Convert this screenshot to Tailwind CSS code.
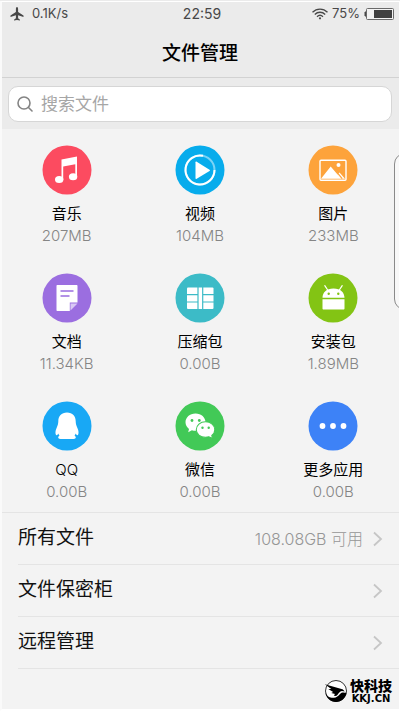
<!DOCTYPE html>
<html lang="zh-CN">
<head>
<meta charset="utf-8">
<meta name="viewport" content="width=device-width, initial-scale=1">
<title>文件管理</title>
<script src="https://cdn.jsdelivr.net/npm/@tailwindcss/browser@4"></script>
</head>
<body class="bg-white">
<div class="relative flex min-h-screen flex-col overflow-hidden bg-[#f3f3f3] font-['Inter','Noto_Sans_CJK_SC',sans-serif] text-black">
  <header class="border-b border-[#d2d2d2] bg-[#ebebeb]">
    <div class="grid h-7 grid-cols-3 items-center pr-1.5 pl-2.5 text-[13px] text-[#484848]">
      <div class="flex items-center gap-2">
        <svg class="size-3.5" viewBox="0 0 14 14" fill="#484848" aria-hidden="true"><path d="M7 0c.7 0 1.1.9 1.1 2v2.900l5.400 3.700v1.300L8.100 8.200v3l1.900 1.500v.900L7 13l-3 .6v-.9l1.900-1.500v-3L.5 9.900V8.600l5.400-3.700V2C5.900.900 6.300 0 7 0Z"/></svg>
        <span>0.1K/s</span>
      </div>
      <time class="text-center text-sm">22:59</time>
      <div class="flex items-center justify-end gap-1">
        <svg class="h-3 w-4" viewBox="0 0 16 12" fill="none" stroke="#484848" stroke-width="1.300" aria-hidden="true"><path d="M.5 4.200c4.300-4.200 10.700-4.200 15 0M2.800 6.500c3-3 7.400-3 10.400 0M5 8.700c1.800-1.700 4.200-1.700 6 0"/><circle cx="8" cy="10.300" r="1.100" fill="#484848" stroke="none"/></svg>
        <span>75%</span>
        <svg class="h-3 w-7.5" viewBox="0 0 30 12" aria-hidden="true"><path d="M2 4H1v4h1" fill="#484848" stroke="#484848"/><rect x="2.500" y=".5" width="27" height="11" rx="1" fill="#f3f3f3" stroke="#6a6a6a"/><rect x="10" y="2" width="18" height="8" fill="#404040"/></svg>
      </div>
    </div>
    <h1 class="flex h-[49px] items-center justify-center pt-1 text-[19px] font-medium">文件管理</h1>
  </header>

  <form class="bg-[#ebebeb] px-2 pt-2 pb-[7px]" role="search">
    <div class="flex h-9 items-center gap-2 rounded-[10px] border border-[#d6d6d6] bg-white px-2">
      <label for="q" aria-label="搜索文件"><svg class="size-4" viewBox="0 0 16 16" fill="none" stroke="#848484" stroke-width="1.600" stroke-linecap="round" aria-hidden="true"><circle cx="7" cy="7" r="6"/><path d="m11.500 11.500 3.500 3.500"/></svg></label>
      <input id="q" type="search" placeholder="搜索文件" class="min-w-0 flex-1 bg-transparent pt-0.5 text-[17px] outline-none placeholder:text-[#a6a6a6]">
    </div>
  </form>

  <main class="flex-1">
    <section class="grid grid-cols-3 gap-y-[17px] pt-4">
      <button type="button" class="flex h-[111px] flex-col items-center">
        <svg class="size-[50px]" viewBox="0 0 50 50" aria-hidden="true"><circle cx="25" cy="25" r="24.500" fill="#fc4b60"/><path d="M19.500 14.500 35 11.500v20h-1.700V19.300l-12.100 2.300v13.200h-1.700Z" fill="#fff"/><ellipse cx="17.200" cy="34.600" rx="4.200" ry="3.500" fill="#fff"/><ellipse cx="31.100" cy="31.700" rx="4.200" ry="3.500" fill="#fff"/></svg>
        <span class="mt-[7px] text-[15px] leading-6">音乐</span>
        <span class="text-[15px] leading-5 font-light text-[#858585]">207MB</span>
      </button>
      <button type="button" class="flex h-[111px] flex-col items-center">
        <svg class="size-[50px]" viewBox="0 0 50 50" aria-hidden="true"><circle cx="25" cy="25" r="24.500" fill="#07acec"/><circle cx="25" cy="25" r="14.500" fill="none" stroke="#7bd3f5" stroke-width="2"/><path d="M39.500 25A14.500 14.500 0 1 1 28 10.800" fill="none" stroke="#fff" stroke-width="2"/><path d="M20.500 17.300v15.900c0 .8.500 1 1.200.6l12.800-7.800c.6-.4.600-.9 0-1.300l-12.800-8c-.7-.4-1.200-.2-1.200.6Z" fill="#fff"/></svg>
        <span class="mt-[7px] text-[15px] leading-6">视频</span>
        <span class="text-[15px] leading-5 font-light text-[#858585]">104MB</span>
      </button>
      <button type="button" class="flex h-[111px] flex-col items-center">
        <svg class="size-[50px]" viewBox="0 0 50 50" aria-hidden="true"><circle cx="25" cy="25" r="24.500" fill="#fda33b"/><rect x="12" y="15.200" width="26" height="20" rx="1" fill="none" stroke="#fff" stroke-width="1.400"/><circle cx="30.500" cy="20" r="2" fill="#fff"/><path d="m13 33.800 9.700-12.300 6.800 8 2-2 5.500 6.300Z" fill="#fff"/><path d="m29.500 28 4.700 5.600" stroke="#fda33b" stroke-width="1.200"/></svg>
        <span class="mt-[7px] text-[15px] leading-6">图片</span>
        <span class="text-[15px] leading-5 font-light text-[#858585]">233MB</span>
      </button>
      <button type="button" class="flex h-[111px] flex-col items-center">
        <svg class="size-[50px]" viewBox="0 0 50 50" aria-hidden="true"><circle cx="25" cy="25" r="24.500" fill="#9b6ee0"/><path d="M15.500 12h19c.7 0 1 .4 1 1v16.500h-7.700V38H15.500c-.7 0-1-.4-1-1V13c0-.6.3-1 1-1Z" fill="#fff"/><path d="M28.500 30.500h7l-7 7Z" fill="#d9c8f5"/><path d="M18.500 18h13M18.500 23h9" stroke="#9b6ee0" stroke-width="1.600"/></svg>
        <span class="mt-[7px] text-[15px] leading-6">文档</span>
        <span class="text-[15px] leading-5 font-light text-[#858585]">11.34KB</span>
      </button>
      <button type="button" class="flex h-[111px] flex-col items-center">
        <svg class="size-[50px]" viewBox="0 0 50 50" aria-hidden="true"><circle cx="25" cy="25" r="24.500" fill="#3cbbc7"/><rect x="12" y="14.500" width="26.500" height="21.500" rx="1" fill="#fff"/><path d="M23 14v22.500M27.700 14v22.500M11 21.700h12M27.700 21.700H39M11 29h12M27.700 29H39" stroke="#3cbbc7" stroke-width="1.200"/></svg>
        <span class="mt-[7px] text-[15px] leading-6">压缩包</span>
        <span class="text-[15px] leading-5 font-light text-[#858585]">0.00B</span>
      </button>
      <button type="button" class="flex h-[111px] flex-col items-center">
        <svg class="size-[50px]" viewBox="0 0 50 50" aria-hidden="true"><circle cx="25" cy="25" r="24.500" fill="#83c414"/><path d="M14.500 24.800c0-5.200 3.800-9.300 11-9.300s11 4.100 11 9.300ZM14.500 26.300h22v9.200c0 .7-.4 1.100-1.100 1.100H15.600c-.7 0-1.100-.4-1.100-1.100Z" fill="#fff"/><path d="m20 17.500-3.200-4.800M31 17.500l3.200-4.800" stroke="#fff" stroke-width="1.200" stroke-linecap="round"/><circle cx="20.700" cy="20.700" r="1.200" fill="#83c414"/><circle cx="30.300" cy="20.700" r="1.200" fill="#83c414"/></svg>
        <span class="mt-[7px] text-[15px] leading-6">安装包</span>
        <span class="text-[15px] leading-5 font-light text-[#858585]">1.89MB</span>
      </button>
      <button type="button" class="flex h-[111px] flex-col items-center">
        <svg class="size-[50px]" viewBox="0 0 50 50" aria-hidden="true"><circle cx="25" cy="25" r="24.500" fill="#18a8f5"/><path d="M25 11.500c-5.600 0-8.700 3.700-8.700 8.800 0 2.500-.7 4.500-1.700 6.700-1.300 2.700-1.500 5.700-.5 7.200.9.200 1.700-.7 2.300-1.700.2.900.6 1.600 1.100 2.200-.8.400-1.300 1-1.300 1.800 0 1.100 1.600 1.500 4 1.500h9.600c2.400 0 4-.4 4-1.500 0-.8-.5-1.400-1.300-1.800.5-.6.9-1.300 1.100-2.200.6 1 1.400 1.900 2.300 1.700 1-1.500.8-4.500-.5-7.200-1-2.200-1.700-4.200-1.700-6.700 0-5.100-3.100-8.800-8.700-8.800Z" fill="#fff"/></svg>
        <span class="mt-[7px] text-[15px] leading-6 font-light">QQ</span>
        <span class="text-[15px] leading-5 font-light text-[#858585]">0.00B</span>
      </button>
      <button type="button" class="flex h-[111px] flex-col items-center">
        <svg class="size-[50px]" viewBox="0 0 50 50" aria-hidden="true"><circle cx="25" cy="25" r="24.500" fill="#42c957"/><path d="M20.500 12.500c-5.800 0-10 4-10 8.800 0 2.700 1.400 5 3.500 6.600l-.8 3.300 3.700-2c1.100.4 2.400.6 3.600.6 5.800 0 10-3.800 10-8.500 0-4.800-4.200-8.800-10-8.800Z" fill="#fff"/><path d="M30.500 20.800c5.400 0 9.300 3.500 9.300 7.900 0 2.400-1.200 4.300-3 5.700l.7 3.200-3.600-1.800c-1 .3-2.200.5-3.400.5-5.300 0-9.200-3.300-9.200-7.600 0-4.400 3.900-7.900 9.200-7.900Z" fill="#fff" stroke="#42c957" stroke-width="1.100"/><g fill="#42c957"><circle cx="17" cy="19.500" r="1.400"/><circle cx="24.300" cy="19.500" r="1.400"/><circle cx="27.500" cy="26.700" r="1.200"/><circle cx="33.700" cy="26.700" r="1.200"/></g></svg>
        <span class="mt-[7px] text-[15px] leading-6">微信</span>
        <span class="text-[15px] leading-5 font-light text-[#858585]">0.00B</span>
      </button>
      <button type="button" class="flex h-[111px] flex-col items-center">
        <svg class="size-[50px]" viewBox="0 0 50 50" aria-hidden="true"><circle cx="25" cy="25" r="24.500" fill="#3d82f7"/><g fill="#fff"><circle cx="14.500" cy="25" r="2.900"/><circle cx="25" cy="25" r="2.900"/><circle cx="35.500" cy="25" r="2.900"/></g></svg>
        <span class="mt-[7px] text-[15px] leading-6">更多应用</span>
        <span class="text-[15px] leading-5 font-light text-[#858585]">0.00B</span>
      </button>
    </section>

    <nav class="border-t border-[#e4e4e4] pl-[18px] text-[19px] text-[#111]">
      <a href="#all" class="flex h-13 items-center justify-between border-b border-[#e4e4e4] pr-[17px]">
        <span>所有文件</span>
        <span class="flex items-center gap-2.5 text-base font-light text-[#969696]">108.08GB 可用
          <svg class="h-4 w-2.5" viewBox="0 0 10 16" fill="none" stroke="#c6c6c6" stroke-width="1.800" aria-hidden="true"><path d="m1 1.500 7 6.500-7 6.500"/></svg>
        </span>
      </a>
      <a href="#safe" class="flex h-13 items-center justify-between border-b border-[#e4e4e4] pr-[17px]">
        <span>文件保密柜</span>
        <svg class="h-4 w-2.5" viewBox="0 0 10 16" fill="none" stroke="#c6c6c6" stroke-width="1.800" aria-hidden="true"><path d="m1 1.500 7 6.500-7 6.500"/></svg>
      </a>
      <a href="#remote" class="flex h-13 items-center justify-between border-b border-[#e4e4e4] pr-[17px]">
        <span>远程管理</span>
        <svg class="h-4 w-2.5" viewBox="0 0 10 16" fill="none" stroke="#c6c6c6" stroke-width="1.800" aria-hidden="true"><path d="m1 1.500 7 6.500-7 6.500"/></svg>
      </a>
    </nav>
  </main>

  <div class="absolute top-[153px] -right-4 h-[157px] w-[22px] rounded-2xl border border-[#8a8a8a] bg-[#f8f8f8]"></div>

  <div class="absolute right-2 bottom-[7px] flex items-center gap-0.5 text-black">
    <svg class="size-6" viewBox="0 0 24 24" aria-hidden="true"><circle cx="12" cy="12" r="10.500" fill="#fff" stroke="#000" stroke-width=".8"/><path d="M.8 5.200 17.500 10c1.400.3 2.600 1.200 3.200 2.600l-2.800-.7c-2.200.3-3.100 2.200-4.300 3.800-1 1.300-2.600 1.500-3.800.8l1.200-1.400-3.700-1.200 1.800-.8L4.300 10l3-.1ZM1.600 13.500c1.600 4.400 5 5.700 8.400 5.300 4.800-.6 5.400-4.700 8.600-5.300 1.400-.2 2.700.3 3.900.3C21.600 19.300 17.300 23 12 23 6.600 23 2.200 19 1.600 13.500Z"/></svg>
    <div class="flex flex-col items-center">
      <span class="text-sm leading-4 font-black">快科技</span>
      <span class="font-['DejaVu_Sans',sans-serif] text-[10px] leading-[10px] font-bold">KKJ.CN</span>
    </div>
  </div>

  <div class="pointer-events-none absolute inset-x-0 top-px bottom-0 border-t border-r border-b-2 border-l-2 border-t-white border-r-white border-b-white border-l-[#fafafa]"></div>
</div>
</body>
</html>
